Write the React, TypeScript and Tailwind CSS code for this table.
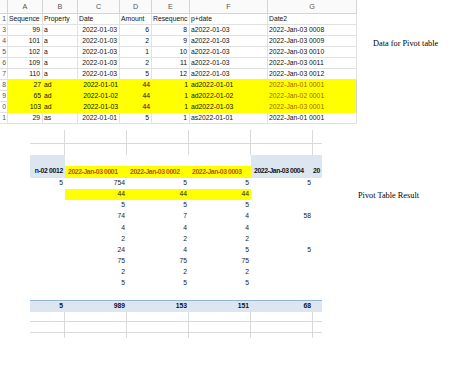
import React from 'react';

const sheetFont = { fontFamily: '"Liberation Sans", Arial, sans-serif' };
const serifFont = { fontFamily: '"Liberation Serif", "Times New Roman", serif' };

type Align = 'l' | 'r' | 'c';

const letters = ['', 'A', 'B', 'C', 'D', 'E', 'F', 'G'];
const headAlign: Align[] = ['r', 'l', 'l', 'l', 'l', 'l', 'l', 'l'];
const dataAlign: Align[] = ['r', 'r', 'l', 'r', 'r', 'r', 'l', 'l'];

const sheetRows: { n: string; cells: string[]; hi?: boolean; head?: boolean }[] = [
  { n: '1', cells: ['Sequence', 'Property', 'Date', 'Amount', 'Resequenc', 'p+date', 'Date2'], head: true },
  { n: '53', cells: ['99', 'a', '2022-01-03', '6', '8', 'a2022-01-03', '2022-Jan-03 0008'] },
  { n: '54', cells: ['101', 'a', '2022-01-03', '2', '9', 'a2022-01-03', '2022-Jan-03 0009'] },
  { n: '55', cells: ['102', 'a', '2022-01-03', '1', '10', 'a2022-01-03', '2022-Jan-03 0010'] },
  { n: '56', cells: ['109', 'a', '2022-01-03', '2', '11', 'a2022-01-03', '2022-Jan-03 0011'] },
  { n: '57', cells: ['110', 'a', '2022-01-03', '5', '12', 'a2022-01-03', '2022-Jan-03 0012'] },
  { n: '58', cells: ['27', 'ad', '2022-01-01', '44', '1', 'ad2022-01-01', '2022-Jan-01 0001'], hi: true },
  { n: '59', cells: ['65', 'ad', '2022-01-02', '44', '1', 'ad2022-01-02', '2022-Jan-02 0001'], hi: true },
  { n: '60', cells: ['103', 'ad', '2022-01-03', '44', '1', 'ad2022-01-03', '2022-Jan-03 0001'], hi: true },
  { n: '61', cells: ['29', 'as', '2022-01-01', '5', '1', 'as2022-01-01', '2022-Jan-01 0001'] },
];

// pivot: col0 .. col4 values per row
const pivotRows: string[][] = [
  ['5', '754', '5', '5', '5'],
  ['', '44', '44', '44', ''],
  ['', '5', '5', '5', ''],
  ['', '74', '7', '4', '58'],
  ['', '4', '4', '4', ''],
  ['', '2', '2', '2', ''],
  ['', '24', '4', '5', '5'],
  ['', '75', '75', '75', ''],
  ['', '2', '2', '2', ''],
  ['', '5', '5', '5', ''],
];
const totals = ['5', '989', '153', '151', '68'];
const pivotW = ['w-[35px]', 'w-[62px]', 'w-[62px]', 'w-[62px]', 'w-[62px]', 'w-[9px]'];

const alignCls = (a: Align) =>
  a === 'r' ? 'justify-end pr-[2px]' : a === 'c' ? 'justify-center' : 'justify-start pl-[1px]';

const GridRow: React.FC<{ h: string; bottom?: boolean }> = ({ h, bottom }) => (
  <div className={`flex ${h}`}>
    {pivotW.map((w, i) => (
      <div
        key={i}
        className={`${w} shrink-0 ${i < 5 ? 'border-r' : ''} ${bottom ? 'border-b' : ''} border-[#d9d9d9]`}
      />
    ))}
  </div>
);

const App: React.FC = () => {
  return (
    <div className="w-[450px] h-[374px] bg-white overflow-hidden text-[#111]" style={sheetFont}>
      {/* source data sheet */}
      <div className="flex">
        <div className="grid grid-cols-[8px_35px_35px_42px_32px_38px_78px_89px] w-[358px] text-[6.8px] leading-none">
          {letters.map((l, i) => (
            <div
              key={'h' + i}
              className="h-[14px] flex items-center justify-center border-b border-r border-[#d4d4d4] bg-[#fafafa] text-[#555] text-[7.2px]"
            >
              {l}
            </div>
          ))}
          {sheetRows.map((row, r) => (
            <React.Fragment key={r}>
              <div className="h-[11px] flex items-center justify-end overflow-hidden whitespace-nowrap border-b border-r border-[#e1e1e1] text-[#555] pr-[1px]">
                {row.n.slice(-1)}
              </div>
              {row.cells.map((c, i) => {
                const a = row.head ? headAlign[i + 1] : dataAlign[i + 1];
                const last = i === 6;
                return (
                  <div
                    key={i}
                    className={`h-[11px] flex items-center overflow-hidden whitespace-nowrap ${alignCls(a)} ${
                      row.hi
                        ? `bg-[#ffff00] ${last ? 'border-r border-[#d4d4d4]' : ''}`
                        : 'border-b border-r border-[#e1e1e1]'
                    } ${row.hi && last ? 'text-[#a86400]' : ''}`}
                  >
                    {c}
                  </div>
                );
              })}
            </React.Fragment>
          ))}
        </div>
        <div className="ml-[15px] mt-[38px] text-[8.3px] text-black whitespace-nowrap" style={serifFont}>
          Data for Pivot table
        </div>
      </div>

      {/* pivot result */}
      <div className="flex mt-[6px]">
        <div className="w-[30px] shrink-0" />
        <div className="w-[292px] overflow-hidden text-[6.8px] leading-none text-[#222]">
          <GridRow h="h-[14px]" bottom />
          <GridRow h="h-[11px]" />
          {/* column headers */}
          <div className="flex h-[23px] font-bold">
            <div className="w-[35px] shrink-0 bg-[#dce6f1] flex items-end justify-end whitespace-nowrap pb-[3px] pr-[2px] text-[#111] tracking-[-0.3px]">
              n-02 0012
            </div>
            {['2022-Jan-03 0001', '2022-Jan-03 0002', '2022-Jan-03 0003'].map((t) => (
              <div key={t} className="w-[62px] shrink-0 flex flex-col">
                <div className="h-[11px]" />
                <div className="h-[12px] bg-[#ffff00] flex items-center pl-[3px] whitespace-nowrap text-[#b8520a] tracking-[-0.4px]">
                  {t}
                </div>
              </div>
            ))}
            <div className="w-[62px] shrink-0 bg-[#dce6f1] flex items-end pb-[3px] pl-[3px] whitespace-nowrap text-[#111] tracking-[-0.4px]">
              2022-Jan-03 0004
            </div>
            <div className="w-[9px] shrink-0 bg-[#dce6f1] flex items-end pb-[3px] whitespace-nowrap text-[#111] tracking-[-0.4px]">
              20
            </div>
          </div>
          {/* values */}
          {pivotRows.map((row, r) => (
            <div key={r} className="flex h-[11.1px]">
              {row.map((v, i) => (
                <div
                  key={i}
                  className={`${pivotW[i]} shrink-0 flex items-center justify-end pr-[2px] ${
                    r === 1 && i >= 1 && i <= 3 ? 'bg-[#ffff00]' : ''
                  }`}
                >
                  {v}
                </div>
              ))}
            </div>
          ))}
          <div className="h-[11px]" />
          {/* grand total */}
          <div className="flex h-[12px] bg-[#dce6f1] border-t border-[#95b3d7] font-bold text-[#111]">
            {totals.map((v, i) => (
              <div key={i} className={`${pivotW[i]} shrink-0 flex items-center justify-end pr-[2px]`}>
                {v}
              </div>
            ))}
          </div>
          <GridRow h="h-[10px]" bottom />
          <GridRow h="h-[11px]" bottom />
          <GridRow h="h-[5px]" />
        </div>
        <div className="ml-[36px] mt-[60px] text-[8.3px] text-black whitespace-nowrap" style={serifFont}>
          Pivot Table Result
        </div>
      </div>
    </div>
  );
};

export default App;
